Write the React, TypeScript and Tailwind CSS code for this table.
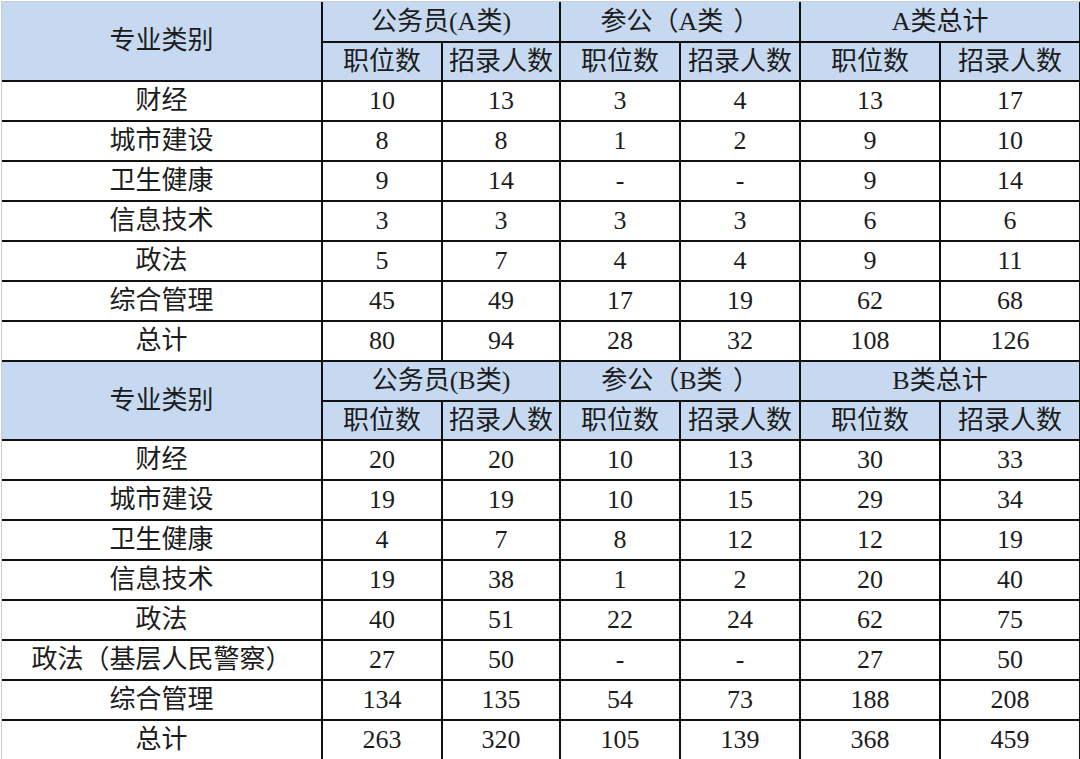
const sections = [
  {
    groups: ['公务员(A类)', '参公（A类）', 'A类总计'],
    rows: [
      ['财经', '10', '13', '3', '4', '13', '17'],
      ['城市建设', '8', '8', '1', '2', '9', '10'],
      ['卫生健康', '9', '14', '-', '-', '9', '14'],
      ['信息技术', '3', '3', '3', '3', '6', '6'],
      ['政法', '5', '7', '4', '4', '9', '11'],
      ['综合管理', '45', '49', '17', '19', '62', '68'],
      ['总计', '80', '94', '28', '32', '108', '126'],
    ],
  },
  {
    groups: ['公务员(B类)', '参公（B类）', 'B类总计'],
    rows: [
      ['财经', '20', '20', '10', '13', '30', '33'],
      ['城市建设', '19', '19', '10', '15', '29', '34'],
      ['卫生健康', '4', '7', '8', '12', '12', '19'],
      ['信息技术', '19', '38', '1', '2', '20', '40'],
      ['政法', '40', '51', '22', '24', '62', '75'],
      ['政法（基层人民警察）', '27', '50', '-', '-', '27', '50'],
      ['综合管理', '134', '135', '54', '73', '188', '208'],
      ['总计', '263', '320', '105', '139', '368', '459'],
    ],
  },
]

const cell = 'border-2 border-[#111] text-center align-middle p-0 leading-none whitespace-nowrap'

// full-width brackets: glyph sits to the right of its box, like the Song face in the source
function Txt({ s, padClose = false }: { s: string; padClose?: boolean }) {
  const parts = s.split(/([（）])/)
  return (
    <>
      {parts.map((p, i) =>
        p === '（' ? (
          <span key={i} className="inline-block w-[1em] text-right">{p}</span>
        ) : p === '）' ? (
          <span key={i} className={padClose ? 'inline-block pl-[0.4em]' : 'inline-block'}>{p}</span>
        ) : (
          p
        )
      )}
    </>
  )
}

export default function App() {
  return (
    <div
      className="w-[1080px] h-[759px] bg-white overflow-hidden pl-[1px] pt-[1px]"
      style={{ fontFamily: '"Liberation Serif", "Noto Sans CJK SC", serif' }}
    >
      <div className="border-l border-t border-[#c4ccd6]">
        <table className="w-[1078px] border-collapse table-fixed text-[26px] text-[#1c1c1c]">
          <colgroup>
            <col className="w-[320px]" />
            <col className="w-[120px]" />
            <col className="w-[118px]" />
            <col className="w-[120px]" />
            <col className="w-[120px]" />
            <col className="w-[140px]" />
            <col className="w-[140px]" />
          </colgroup>
          {sections.map((s, si) => (
            <tbody key={si}>
              <tr className="h-[40px] bg-[#c6d9f0]">
                <td rowSpan={2} className={`${cell} border-l-0 ${si === 0 ? 'border-t-0' : ''}`}>专业类别</td>
                {s.groups.map((g) => (
                  <td key={g} colSpan={2} className={`${cell} ${si === 0 ? 'border-t-0' : ''}`}>
                    <Txt s={g} padClose />
                  </td>
                ))}
              </tr>
              <tr className="h-[39px] bg-[#c6d9f0]">
                {[0, 1, 2].flatMap((i) => [
                  <td key={`a${i}`} className={cell}>职位数</td>,
                  <td key={`b${i}`} className={cell}>招录人数</td>,
                ])}
              </tr>
              {s.rows.map((r, ri) => (
                <tr key={ri} className="h-[40px] bg-white">
                  {r.map((v, ci) => (
                    <td key={ci} className={`${cell} ${ci === 0 ? 'border-l-0' : ''}`}>
                      <Txt s={v} />
                    </td>
                  ))}
                </tr>
              ))}
            </tbody>
          ))}
        </table>
      </div>
    </div>
  )
}
